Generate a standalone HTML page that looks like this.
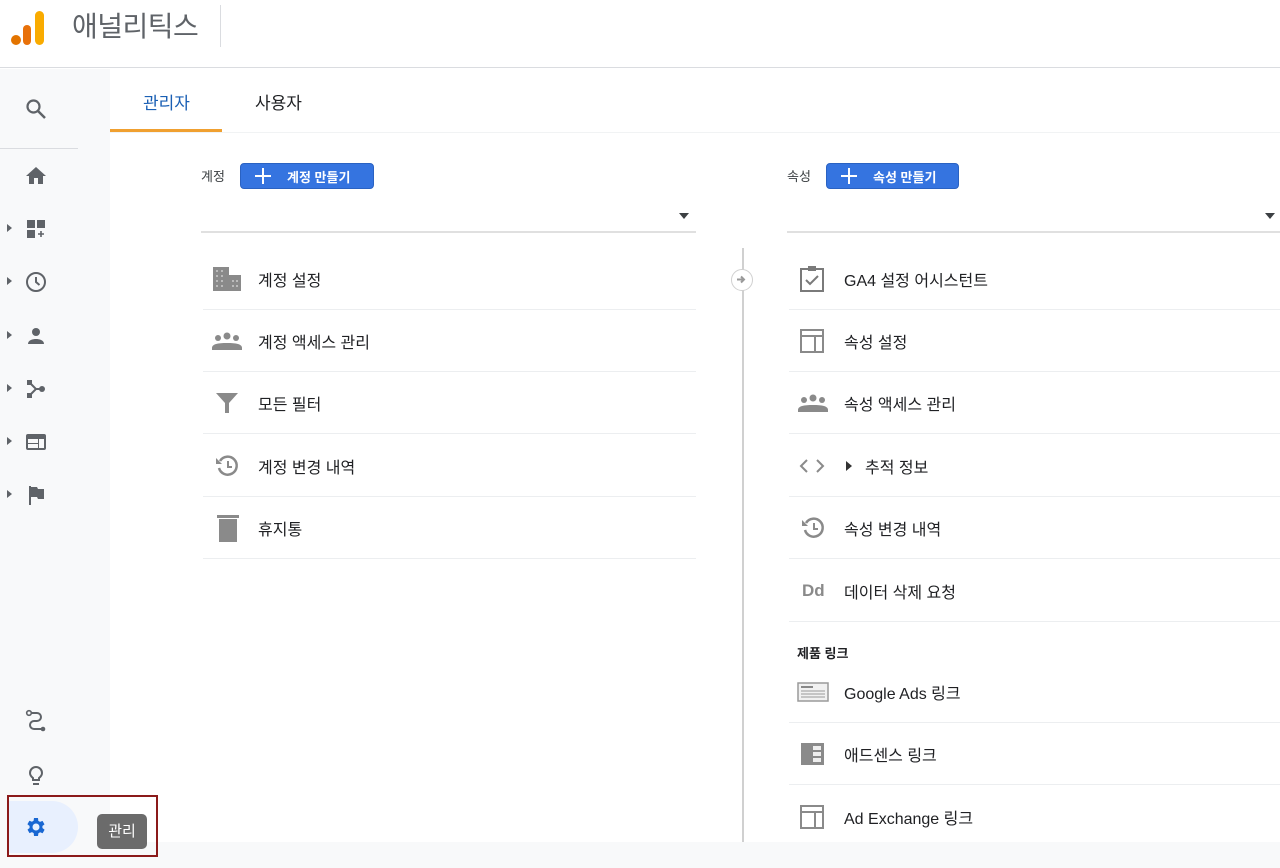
<!DOCTYPE html>
<html><head><meta charset="utf-8">
<style>
*{margin:0;padding:0;box-sizing:border-box}
body{width:1280px;height:868px;overflow:hidden;background:#fff;font-family:"Liberation Sans","Noto Sans CJK KR",sans-serif;color:#202124;position:relative}
.a{position:absolute}
.hdr{left:0;top:0;width:1280px;height:68px;border-bottom:1px solid #dadce0;background:#fff}
.side{left:0;top:69px;width:110px;height:799px;background:#f8f9fa}
.bot{left:110px;top:842px;width:1170px;height:26px;background:#f8f9fa}
.ic{position:absolute;left:24px;width:24px;height:24px}
.tri{position:absolute;left:7px;width:0;height:0;border-top:4px solid transparent;border-bottom:4px solid transparent;border-left:5px solid #5f6368}
.row{position:absolute;height:62px;border-bottom:1px solid #eceef0;font-size:16px;color:#202124;display:flex;align-items:center}
.row .t{position:absolute;left:55px}
.row svg{position:absolute;left:8px}
.btn{background:#3574e0;color:#fff;font-size:13px;font-weight:bold;border-radius:4px;height:26px;border:1px solid #2a62c2;display:flex;align-items:center}
.btn svg{margin-left:13px;margin-right:15px}
</style></head><body>
<div class="a hdr">
 <svg class="a" style="left:10px;top:6px" width="36" height="40" viewBox="0 0 36 40"><circle cx="6" cy="34" r="5" fill="#e37400"/><rect x="13" y="19" width="8" height="20" rx="4" fill="#e8710a"/><rect x="25" y="5" width="9" height="34" rx="4.5" fill="#f9ab00"/></svg>
 <div class="a" style="left:72px;top:5px;font-size:28px;color:#5f6368;letter-spacing:-0.5px">애널리틱스</div>
 <div class="a" style="left:220px;top:5px;width:1px;height:42px;background:#dadce0"></div>
</div>
<div class="a side">
 <svg class="ic" style="top:28px" viewBox="0 0 24 24"><circle cx="9.5" cy="9.5" r="6" stroke="#5f6368" stroke-width="2.2" fill="none"/><path d="M14 14l7 7" stroke="#5f6368" stroke-width="2.5"/></svg>
 <div class="a" style="left:0;top:79px;width:78px;height:1px;background:#dadce0"></div>
 <svg class="ic" style="top:95px" viewBox="0 0 24 24"><path d="M10 20v-6h4v6h5v-8h3L12 3 2 12h3v8z" fill="#5f6368"/></svg>
 <div class="tri" style="top:155px"></div>
 <svg class="ic" style="top:148px" viewBox="0 0 24 24"><rect x="3" y="3" width="8" height="8" fill="#5f6368"/><rect x="13" y="3" width="8" height="8" fill="#5f6368"/><rect x="3" y="13" width="8" height="8" fill="#5f6368"/><path d="M17 14v6M14 17h6" stroke="#5f6368" stroke-width="1.6"/></svg>
 <div class="tri" style="top:208px"></div>
 <svg class="ic" style="top:201px" viewBox="0 0 24 24"><circle cx="12" cy="12" r="9" stroke="#5f6368" stroke-width="2" fill="none"/><path d="M12 7v5l3.5 3" stroke="#5f6368" stroke-width="2" fill="none"/></svg>
 <div class="tri" style="top:262px"></div>
 <svg class="ic" style="top:255px" viewBox="0 0 24 24"><circle cx="12" cy="8" r="4" fill="#5f6368"/><path d="M4 20c0-4 5-5 8-5s8 1 8 5z" fill="#5f6368"/></svg>
 <div class="tri" style="top:315px"></div>
 <svg class="ic" style="top:308px" viewBox="0 0 24 24"><rect x="3" y="3" width="5" height="5" fill="#5f6368"/><rect x="3" y="16" width="5" height="5" fill="#5f6368"/><circle cx="18" cy="12" r="3" fill="#5f6368"/><path d="M6 6l6 6-6 6M12 12h6" stroke="#5f6368" stroke-width="2" fill="none"/></svg>
 <div class="tri" style="top:368px"></div>
 <svg class="ic" style="top:361px" viewBox="0 0 24 24"><rect x="2" y="4" width="20" height="16" rx="2" fill="#5f6368"/><rect x="4" y="9" width="10" height="4" fill="#f8f9fa"/><rect x="4" y="14" width="10" height="4" fill="#f8f9fa"/><rect x="15" y="9" width="5" height="9" fill="#f8f9fa"/></svg>
 <div class="tri" style="top:421px"></div>
 <svg class="ic" style="top:414px" viewBox="0 0 24 24"><path d="M5 3h2v19H5zM7 4h6l1 2h6v10h-6l-1-2H7z" fill="#5f6368"/></svg>
 <svg class="ic" style="top:640px" viewBox="0 0 24 24"><circle cx="5" cy="4" r="2.3" stroke="#5f6368" stroke-width="1.6" fill="none"/><circle cx="19" cy="20" r="2.3" fill="#5f6368"/><path d="M7 4h6a4 4 0 010 8h-3a4 4 0 000 8h7" stroke="#5f6368" stroke-width="2" fill="none"/></svg>
 <svg class="ic" style="top:694px" viewBox="0 0 24 24"><path d="M9 17h6v-2c2-1.5 3-3 3-5a6 6 0 00-12 0c0 2 1 3.5 3 5z" stroke="#5f6368" stroke-width="2" fill="none"/><path d="M9 21h6" stroke="#5f6368" stroke-width="2"/></svg>
 <div class="a" style="left:8px;top:732px;width:70px;height:52px;background:#e8f0fe;border-radius:0 26px 26px 0"></div>
 <svg class="ic" style="top:746px" viewBox="0 0 24 24"><path fill="#1967d2" d="M19.4 13a7.5 7.5 0 000-2l2.1-1.6-2-3.5-2.5 1a7 7 0 00-1.7-1L15 3h-4l-.4 2.7a7 7 0 00-1.7 1l-2.5-1-2 3.5L6.6 11a7.5 7.5 0 000 2l-2.1 1.6 2 3.5 2.5-1a7 7 0 001.7 1L11 21h4l.4-2.7a7 7 0 001.7-1l2.5 1 2-3.5zM13 15.5a3.5 3.5 0 110-7 3.5 3.5 0 010 7z" transform="translate(-1 0)"/></svg>
</div>
<div class="a bot"></div>
<div class="a" style="left:97px;top:814px;width:50px;height:35px;background:#6b6b6b;border-radius:5px;color:#fff;font-size:15px;text-align:center;line-height:35px">관리</div>
<div class="a" style="left:7px;top:795px;width:151px;height:62px;border:2px solid #8b1a1a"></div>

<div class="a" style="left:143px;top:89px;font-size:17px;color:#1a5fb4">관리자</div>
<div class="a" style="left:255px;top:89px;font-size:17px;color:#202124">사용자</div>
<div class="a" style="left:110px;top:129px;width:112px;height:3px;background:#f0a030"></div>
<div class="a" style="left:110px;top:132px;width:1170px;height:1px;background:#f1f3f4"></div>

<div class="a" style="left:201px;top:166px;font-size:13px;color:#3c4043">계정</div>
<div class="a btn" style="left:240px;top:163px;width:134px"><svg width="18" height="18" viewBox="0 0 18 18"><path d="M9 1v16M1 9h16" stroke="#fff" stroke-width="2"/></svg>계정 만들기</div>
<div class="a" style="left:679px;top:213px;border-left:5px solid transparent;border-right:5px solid transparent;border-top:6px solid #3c4043"></div>
<div class="a" style="left:201px;top:231px;width:495px;height:2px;background:#e0e0e0"></div>

<div class="a" style="left:787px;top:166px;font-size:13px;color:#3c4043">속성</div>
<div class="a btn" style="left:826px;top:163px;width:133px"><svg width="18" height="18" viewBox="0 0 18 18"><path d="M9 1v16M1 9h16" stroke="#fff" stroke-width="2"/></svg>속성 만들기</div>
<div class="a" style="left:1265px;top:213px;border-left:5px solid transparent;border-right:5px solid transparent;border-top:6px solid #3c4043"></div>
<div class="a" style="left:787px;top:231px;width:493px;height:2px;background:#e0e0e0"></div>

<div class="a" style="left:742px;top:248px;width:2px;height:594px;background:#d0d0d0"></div>
<div class="a" style="left:731px;top:269px;width:22px;height:22px;border-radius:50%;border:1.5px solid #d0d0d0;background:#fff"><svg class="a" style="left:4px;top:4px" width="11" height="11" viewBox="0 0 11 11"><path d="M1 5.5h6M5 2.5l3 3-3 3" stroke="#999" stroke-width="2" fill="none"/></svg></div>

<!-- left rows -->
<div class="row" style="left:203px;top:248px;width:493px"><svg width="32" height="26" viewBox="0 0 32 26"><rect x="2" y="1" width="16" height="24" fill="#8a8a8a"/><rect x="18" y="9" width="12" height="16" fill="#8a8a8a"/><g fill="#bbb"><rect x="5" y="4" width="2" height="2"/><rect x="10" y="4" width="2" height="2"/><rect x="5" y="9" width="2" height="2"/><rect x="10" y="9" width="2" height="2"/><rect x="5" y="14" width="2" height="2"/><rect x="10" y="14" width="2" height="2"/><rect x="5" y="19" width="2" height="2"/><rect x="10" y="19" width="2" height="2"/><rect x="21" y="14" width="2" height="2"/><rect x="25" y="14" width="2" height="2"/><rect x="21" y="19" width="2" height="2"/><rect x="25" y="19" width="2" height="2"/></g></svg><span class="t">계정 설정</span></div>
<div class="row" style="left:203px;top:310px;width:493px"><svg width="32" height="24" viewBox="0 0 32 24"><circle cx="7" cy="9" r="3" fill="#8a8a8a"/><circle cx="16" cy="7" r="3.5" fill="#8a8a8a"/><circle cx="25" cy="9" r="3" fill="#8a8a8a"/><path d="M1 19c0-4 6-5 15-5s15 1 15 5v2H1z" fill="#8a8a8a"/></svg><span class="t">계정 액세스 관리</span></div>
<div class="row" style="left:203px;top:372px;width:493px"><svg width="32" height="26" viewBox="0 0 32 26"><path d="M5 3h22l-9 10v10h-4V13z" fill="#8a8a8a"/></svg><span class="t">모든 필터</span></div>
<div class="row" style="left:203px;top:435px;width:493px"><svg width="32" height="26" viewBox="0 0 32 26"><path d="M9 8a9 9 0 11-1 7" stroke="#8a8a8a" stroke-width="2.5" fill="none"/><path d="M5 5v6h6z" fill="#8a8a8a"/><path d="M17 8v6h4" stroke="#8a8a8a" stroke-width="2" fill="none"/></svg><span class="t">계정 변경 내역</span></div>
<div class="row" style="left:203px;top:497px;width:493px"><svg width="32" height="30" viewBox="0 0 32 30"><rect x="8" y="6" width="18" height="23" fill="#8a8a8a"/><rect x="6" y="2" width="22" height="3" fill="#8a8a8a"/></svg><span class="t">휴지통</span></div>

<!-- right rows -->
<div class="row" style="left:789px;top:248px;width:491px"><svg width="30" height="30" viewBox="0 0 30 30"><rect x="4" y="5" width="22" height="22" stroke="#7a7a7a" stroke-width="2" fill="none"/><rect x="11" y="2" width="8" height="5" fill="#7a7a7a"/><path d="M9 16l4 4 8-8" stroke="#7a7a7a" stroke-width="2" fill="none"/></svg><span class="t">GA4 설정 어시스턴트</span></div>
<div class="row" style="left:789px;top:310px;width:491px"><svg width="30" height="28" viewBox="0 0 30 28"><rect x="4" y="3" width="22" height="22" stroke="#8a8a8a" stroke-width="2" fill="none"/><path d="M4 9h22M18 9v16" stroke="#8a8a8a" stroke-width="2"/></svg><span class="t">속성 설정</span></div>
<div class="row" style="left:789px;top:372px;width:491px"><svg width="32" height="24" viewBox="0 0 32 24"><circle cx="7" cy="9" r="3" fill="#8a8a8a"/><circle cx="16" cy="7" r="3.5" fill="#8a8a8a"/><circle cx="25" cy="9" r="3" fill="#8a8a8a"/><path d="M1 19c0-4 6-5 15-5s15 1 15 5v2H1z" fill="#8a8a8a"/></svg><span class="t">속성 액세스 관리</span></div>
<div class="row" style="left:789px;top:435px;width:491px"><svg width="30" height="24" viewBox="0 0 30 24"><path d="M10 6l-6 6 6 6M20 6l6 6-6 6" stroke="#8a8a8a" stroke-width="2" fill="none"/></svg><span class="a" style="left:57px;top:26px;border-top:5px solid transparent;border-bottom:5px solid transparent;border-left:6px solid #333"></span><span class="t" style="left:76px">추적 정보</span></div>
<div class="row" style="left:789px;top:497px;width:491px"><svg width="32" height="26" viewBox="0 0 32 26"><path d="M9 8a9 9 0 11-1 7" stroke="#8a8a8a" stroke-width="2.5" fill="none"/><path d="M5 5v6h6z" fill="#8a8a8a"/><path d="M17 8v6h4" stroke="#8a8a8a" stroke-width="2" fill="none"/></svg><span class="t">속성 변경 내역</span></div>
<div class="row" style="left:789px;top:560px;width:491px"><span class="a" style="left:13px;font-size:17px;font-weight:bold;color:#8a8a8a">Dd</span><span class="t">데이터 삭제 요청</span></div>
<div class="a" style="left:797px;top:643px;font-size:13px;font-weight:bold;color:#202124">제품 링크</div>
<div class="row" style="left:789px;top:661px;width:491px"><svg width="32" height="24" viewBox="0 0 32 24"><rect x="1" y="3" width="30" height="18" stroke="#9a9a9a" stroke-width="1.5" fill="#f1f1f1"/><rect x="4" y="6" width="12" height="2" fill="#888"/><path d="M4 11h24M4 14h24M4 17h24" stroke="#999" stroke-width="1"/></svg><span class="t">Google Ads 링크</span></div>
<div class="row" style="left:789px;top:723px;width:491px"><svg width="30" height="28" viewBox="0 0 30 28"><rect x="4" y="3" width="23" height="22" fill="#8a8a8a"/><rect x="16" y="6" width="8" height="4" fill="#eee"/><rect x="16" y="12" width="8" height="4" fill="#eee"/><rect x="16" y="18" width="8" height="4" fill="#eee"/></svg><span class="t">애드센스 링크</span></div>
<div class="row" style="left:789px;top:786px;width:491px;border-bottom:none"><svg width="30" height="28" viewBox="0 0 30 28"><rect x="4" y="3" width="22" height="22" stroke="#8a8a8a" stroke-width="2" fill="none"/><path d="M4 9h22M18 9v16" stroke="#8a8a8a" stroke-width="2"/></svg><span class="t">Ad Exchange 링크</span></div>
</body></html>
